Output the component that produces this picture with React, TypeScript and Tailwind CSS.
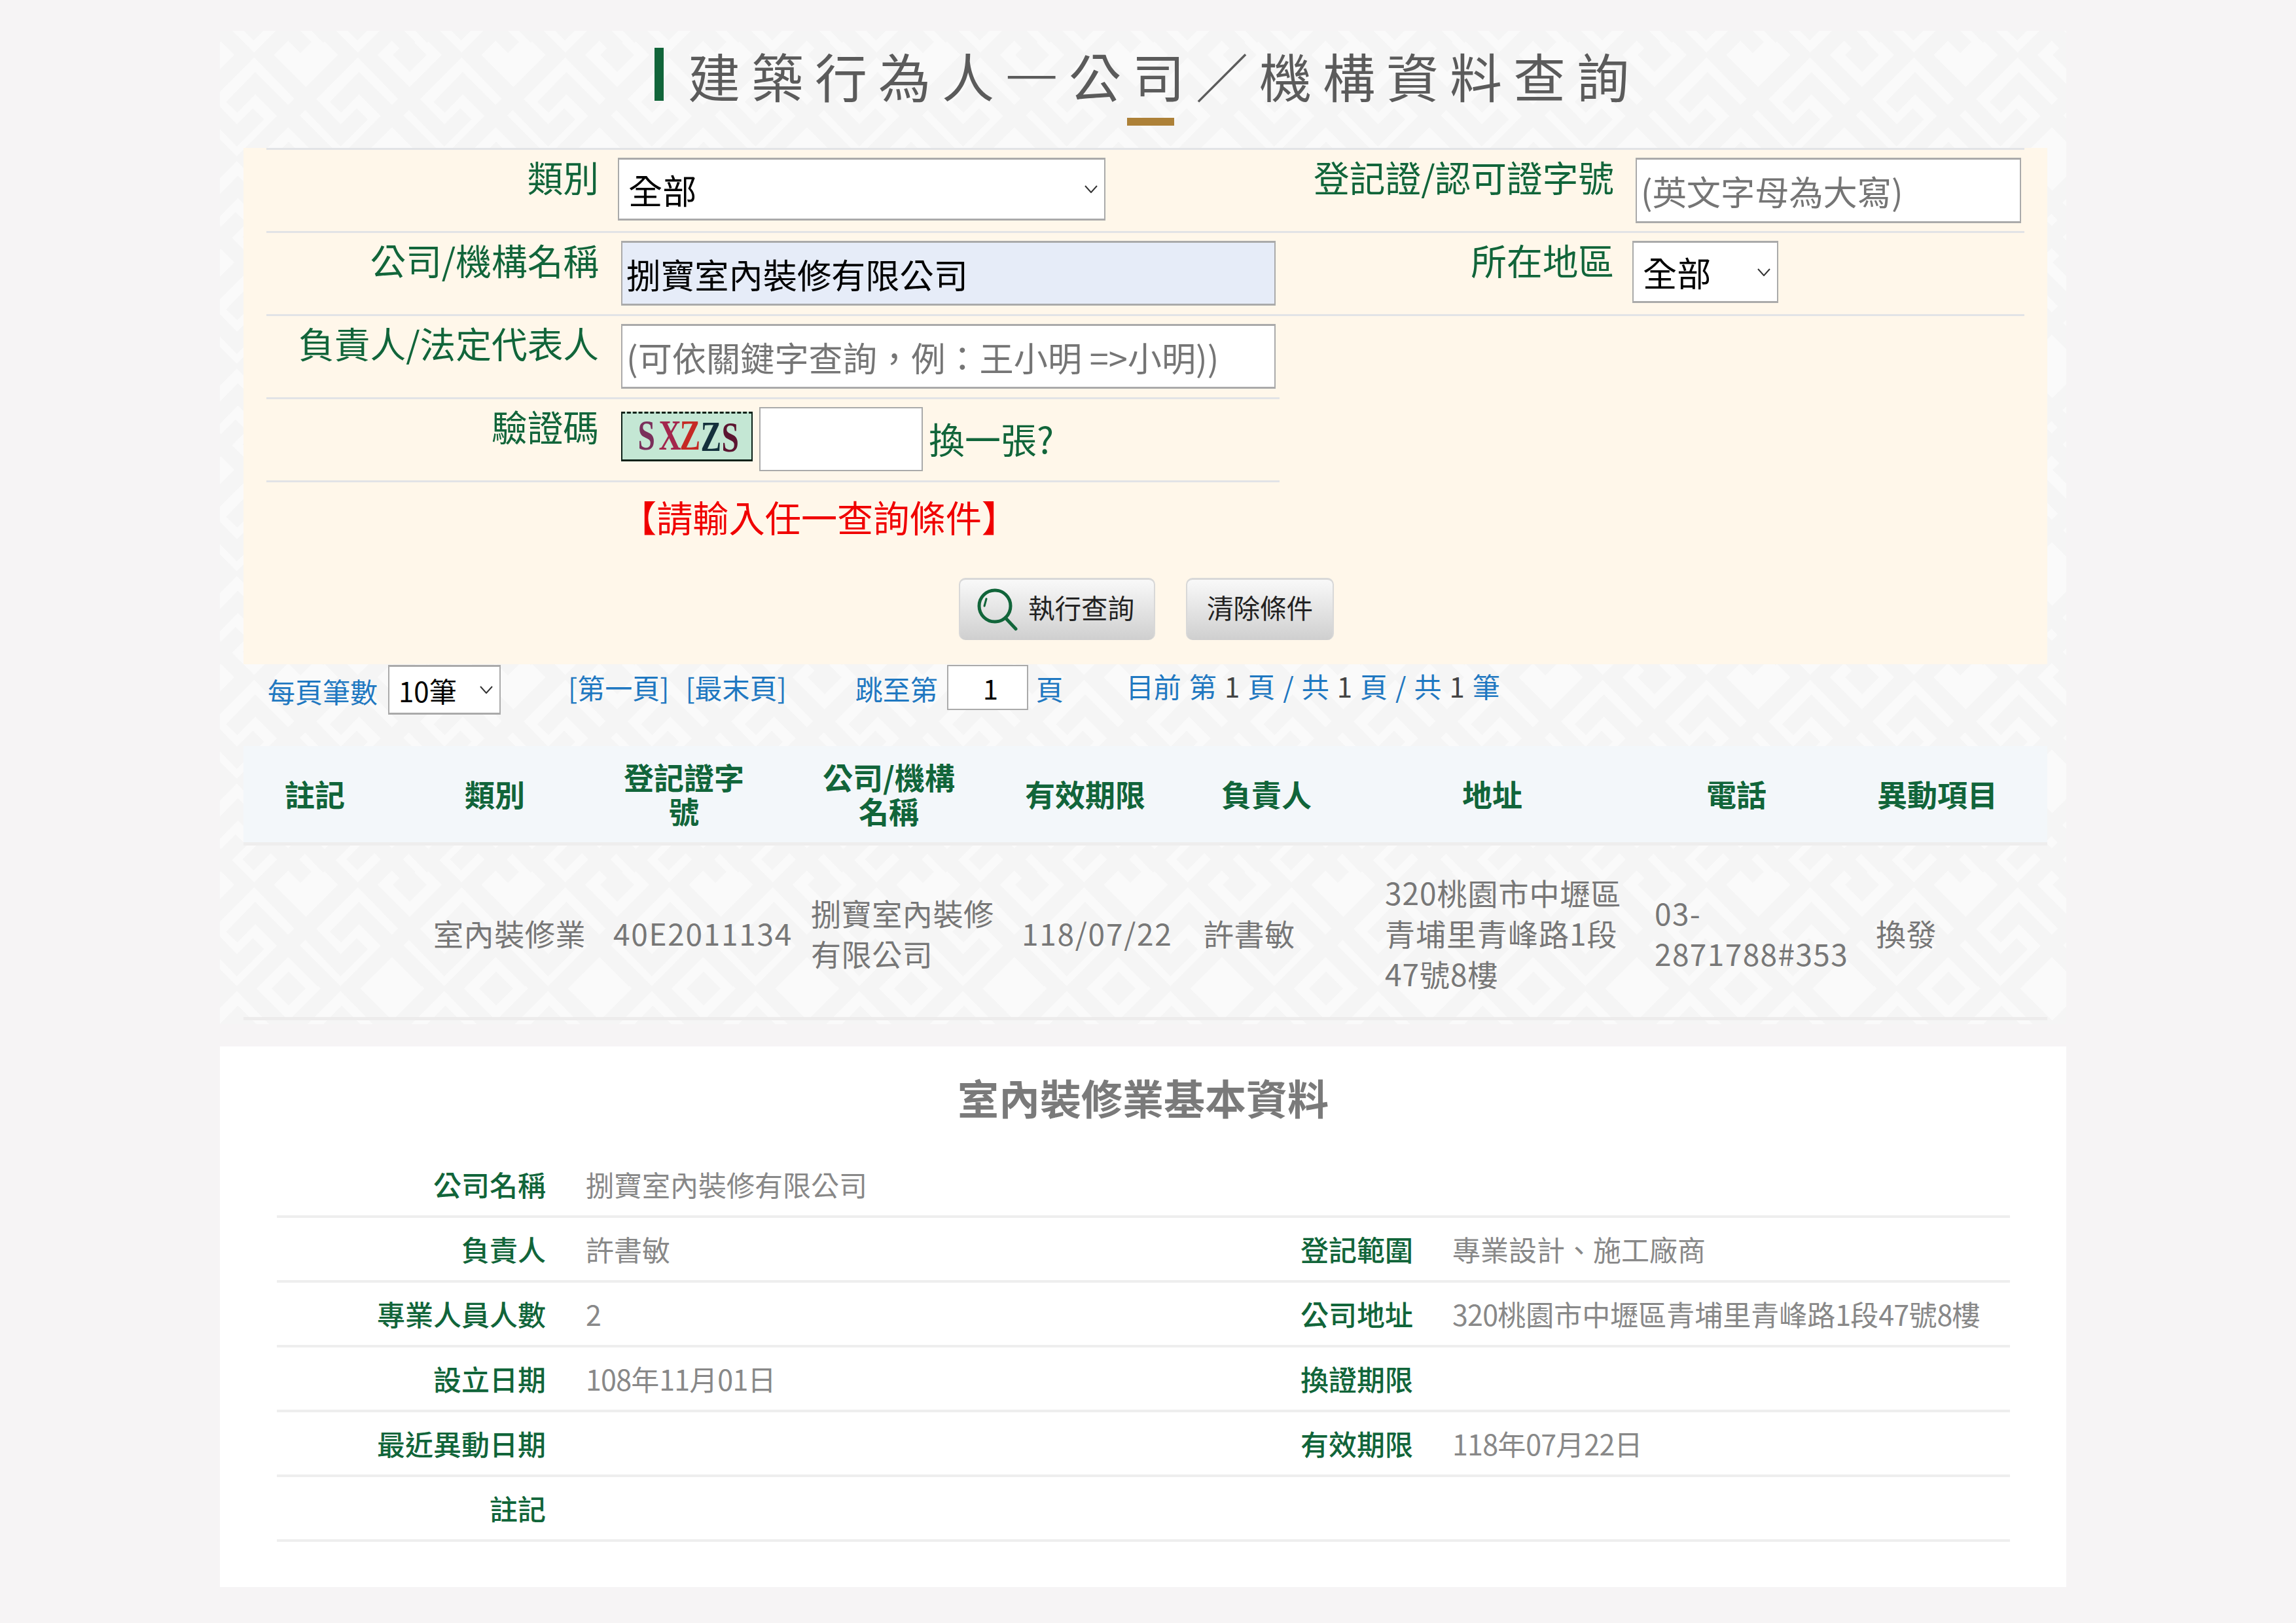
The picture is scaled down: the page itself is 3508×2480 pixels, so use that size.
import React from 'react'

const font = "font-['Noto_Sans_CJK_TC','Noto_Sans',sans-serif]"

const headers = [
  { w: 'w-[218px]', text: <>註記</> },
  { w: 'w-[332px]', text: <>類別</> },
  { w: 'w-[246px]', text: <>登記證字<br />號</> },
  { w: 'w-[380px]', text: <>公司/機構<br />名稱</> },
  { w: 'w-[220px]', text: <>有效期限</> },
  { w: 'w-[334px]', text: <>負責人</> },
  { w: 'w-[356px]', text: <>地址</> },
  { w: 'w-[390px]', text: <>電話</> },
  { w: 'w-[224px]', text: <>異動項目</> },
]

const detailRows = [
  ['公司名稱', '捌寶室內裝修有限公司', '', ''],
  ['負責人', '許書敏', '登記範圍', '專業設計、施工廠商'],
  ['專業人員人數', '2', '公司地址', '320桃園市中壢區青埔里青峰路1段47號8樓'],
  ['設立日期', '108年11月01日', '換證期限', ''],
  ['最近異動日期', '', '有效期限', '118年07月22日'],
  ['註記', '', '', ''],
]

// 底圖的菱形回紋：一個菱形環加上往下延伸的斜帶
function Unit({ solid }: { solid: boolean }) {
  return (
    <g>
      {solid && <path d="M-26 0 L0 -26 L26 0 L0 26 Z" fill="#f5f5f5" stroke="none" />}
      <path d="M-66 0 L0 -66 L66 0 L0 66 Z" />
      <path d="M-66 0 L53 123 L86 90" />
      <path d="M66 0 L-62 128" />
      <path d="M45 80 L81 43 L185 147" />
    </g>
  )
}

function Pattern() {
  const rows = [-2, -1, 0, 1, 2]
  const cols = [-4, -3, -2, -1, 0, 1, 2, 3, 4]
  return (
    <svg className="absolute inset-0 w-full h-full" aria-hidden="true">
      <defs>
        <pattern id="lattice" width="317" height="317" patternUnits="userSpaceOnUse" patternTransform="translate(290 37)">
          <g fill="none" stroke="#f5f5f5" strokeWidth="24">
            {rows.map((r) =>
              cols.map((c) => (
                <g key={`${r}-${c}`} transform={`translate(${c * 158.5 + (r % 2 !== 0 ? 132 : 0)} ${r * 158.5})`}>
                  <Unit solid={c % 2 === 0} />
                </g>
              ))
            )}
          </g>
        </pattern>
      </defs>
      <rect width="100%" height="100%" fill="#fafafa" />
      <rect width="100%" height="100%" fill="url(#lattice)" />
    </svg>
  )
}

function Label({ w, children }: { w: string; children: React.ReactNode }) {
  return <div className={`${w} shrink-0 text-right text-[54.7px] leading-[81px] text-[#11653a]`}>{children}</div>
}

function Select({ value, className, textClass }: { value: string; className: string; textClass: string }) {
  return (
    <div className={`relative ${className}`}>
      <select
        defaultValue={value}
        className={`appearance-none w-full h-full pl-[14px] bg-white border-x-2 border-y-[3px] border-[#aaaaaa] text-black outline-none ${textClass}`}
      >
        <option>{value}</option>
      </select>
      <svg
        className="absolute right-[12px] top-1/2 -translate-y-1/2 pointer-events-none"
        width="20"
        height="12"
        viewBox="0 0 20 12"
        fill="none"
        stroke="#333333"
        strokeWidth="2"
      >
        <path d="M1 1 L10 11 L19 1" />
      </svg>
    </div>
  )
}

// 數字字距比中文窄一點
function Value({ text }: { text: string }) {
  return (
    <>
      {text.split(/(\d+)/).map((part, i) =>
        /\d/.test(part) ? (
          <span key={i} className="tracking-[-0.8px]">{part}</span>
        ) : (
          part
        )
      )}
    </>
  )
}

const boxClass =
  'border-x-2 border-y-[3px] border-[#aaaaaa] text-[52.2px] leading-none text-black placeholder:text-[#757575] outline-none'

const captchaLetter = 'inline-block w-[32px] text-center scale-x-[0.72]'

export default function App() {
  return (
    <div className={`${font} w-[3508px] h-[2480px] bg-[#f6f4f5] pt-[47px] pl-[336px] overflow-hidden`}>
      <div className="relative w-[2821px] h-[1518px]">
        <Pattern />
        <div className="relative">
          {/* 標題 */}
          <div className="h-[133px] pl-[664px] pt-[26px] flex items-start">
            <div className="w-[14px] h-[81px] bg-[#11653a]" />
            <h1 className="ml-[37px] -mt-[11px] text-[80px] leading-[104px] tracking-[17px] text-[#5b5b5b] font-normal whitespace-nowrap">
              建築行為人<span className="font-light">一</span>公司／機構資料查詢
            </h1>
          </div>
          <div className="ml-[1386px] w-[72px] h-[12px] bg-[#ad8138]" />

          {/* 查詢表單 */}
          <div className="ml-[36px] mt-[34px] w-[2756px] h-[789px] bg-[#fff7ea] px-[35px]">
            <div className="h-[127px] border-t-[3px] border-[#e2e3e6] flex">
              <div className="w-[1548px] shrink-0 flex">
                <Label w="w-[508px]">類別</Label>
                <Select value="全部" className="ml-[29px] mt-[12px] w-[745px] h-[96px]" textClass="text-[52.2px]" />
              </div>
              <Label w="w-[511px]">登記證/認可證字號</Label>
              <input placeholder="(英文字母為大寫)" className={`${boxClass} ml-[33px] mt-[12px] w-[589px] h-[100px] px-[6px] bg-white`} />
            </div>
            <div className="h-[127px] border-t-[3px] border-[#e2e3e6] flex">
              <div className="w-[1548px] shrink-0 flex">
                <Label w="w-[508px]">公司/機構名稱</Label>
                <input readOnly defaultValue="捌寶室內裝修有限公司" className={`${boxClass} ml-[34px] mt-[12px] w-[1000px] h-[99px] px-[6px] bg-[#e6ecf8]`} />
              </div>
              <Label w="w-[511px]">所在地區</Label>
              <Select value="全部" className="ml-[28px] mt-[12px] w-[223px] h-[95px]" textClass="text-[52.2px]" />
            </div>
            <div className="h-[127px] border-t-[3px] border-[#e2e3e6] flex">
              <Label w="w-[508px]">負責人/法定代表人</Label>
              <input placeholder="(可依關鍵字查詢，例：王小明 =>小明))" className={`${boxClass} ml-[34px] mt-[12px] w-[1000px] h-[99px] px-[6px] bg-white`} />
            </div>
            <div className="w-[1548px] h-[130px] border-y-[3px] border-[#e2e3e6] flex">
              <Label w="w-[508px]">驗證碼</Label>
              <div className="ml-[34px] mt-[19px] pb-[5px] w-[201px] h-[76px] bg-[#c4e7d4] border-x-2 border-b-[3px] border-t-[3px] border-[#0c2118] [border-top-style:dashed] flex items-center justify-center overflow-hidden font-['Liberation_Serif',serif] font-bold text-[66px] leading-none">
                <span className={`${captchaLetter} text-[#7a2f5b]`}>S</span>
                <span className={`${captchaLetter} text-[#a3264d]`}>X</span>
                <span className={`${captchaLetter} text-[#c52a25]`}>Z</span>
                <span className={`${captchaLetter} text-[#14303c] translate-y-[2px]`}>Z</span>
                <span className={`${captchaLetter} text-[#5c1530] translate-y-[3px]`}>S</span>
              </div>
              <input className="ml-[10px] mt-[12px] w-[250px] h-[98px] border-2 border-[#aaaaaa] bg-white outline-none" />
              <div className="ml-[9px] mt-[19px] text-[55px] leading-[81px] text-[#11653a]">換一張?</div>
            </div>
            <div className="pl-[541px] pt-[12px] text-[55.2px] leading-[81px] text-[#f00000]">【請輸入任一查詢條件】</div>
            <div className="ml-[1058px] mt-[53px] flex gap-[47px]">
              <button className="w-[300px] h-[95px] rounded-[10px] border-t-[3px] border-x-2 border-[#d8d8d8] border-b-0 bg-gradient-to-b from-[#f9f9f9] to-[#cfcfcf] flex items-center pl-[26px] text-[40.5px] text-[#222222]">
                <svg width="62" height="66" viewBox="0 0 62 66" fill="none" stroke="#11653a" strokeLinecap="round">
                  <circle cx="27" cy="27" r="24" strokeWidth="5" />
                  <path d="M43 45 L59 62" strokeWidth="5" />
                  <path d="M14 16 L11 27" strokeWidth="3" />
                </svg>
                <span className="ml-[16px] pb-[8px]">執行查詢</span>
              </button>
              <button className="w-[226px] h-[95px] rounded-[10px] border-t-[3px] border-x-2 border-[#d8d8d8] border-b-0 bg-gradient-to-b from-[#f9f9f9] to-[#cfcfcf] text-center text-[40.5px] text-[#222222] pb-[8px]">
                清除條件
              </button>
            </div>
          </div>

          {/* 分頁列 */}
          <div className="h-[125px] pl-[73px] flex items-start text-[42px] leading-[63px] text-[#1f78c1] whitespace-nowrap">
            <span className="mt-[9px]">每頁筆數</span>
            <Select value="10筆" className="ml-[16px] mt-[1px] w-[172px] h-[76px]" textClass="" />
            <span className="ml-[103px] mt-[3px]">[第一頁]</span>
            <span className="ml-[25px] mt-[3px]">[最末頁]</span>
            <span className="ml-[105px] mt-[5px]">跳至第</span>
            <input readOnly defaultValue="1" className="ml-[14px] mt-[1px] w-[124px] h-[69px] pl-[9px] border-2 border-[#aaaaaa] bg-white text-center text-black outline-none" />
            <span className="ml-[12px] mt-[5px]">頁</span>
            <span className="ml-[96px] mt-[1px] [word-spacing:2.6px]">
              目前 第 <span className="text-[#444444]">1</span> 頁 / 共 <span className="text-[#444444]">1</span> 頁 / 共 <span className="text-[#444444]">1</span> 筆
            </span>
          </div>

          {/* 查詢結果 */}
          <div className="ml-[36px] w-[2756px]">
            <div className="h-[152px] pb-[4px] bg-[#f3f7fa] border-b-[5px] border-[#eeeded] flex items-center text-[46px] leading-[52px] font-bold text-[#11653a] text-center">
              {headers.map((h, i) => (
                <div key={i} className={`${h.w} shrink-0`}>{h.text}</div>
              ))}
            </div>
            <div className="h-[267px] border-b-[5px] border-[#edecec] flex items-center pt-[4px] text-[46px] leading-[62px] tracking-[0.6px] text-[#777777]">
              <div className="w-[290px] shrink-0" />
              <div className="w-[275px] shrink-0">室內裝修業</div>
              <div className="w-[302px] shrink-0 tracking-[1.7px]">40E2011134</div>
              <div className="w-[322px] shrink-0">捌寶室內裝修<br />有限公司</div>
              <div className="w-[278px] shrink-0 tracking-[1.75px]">118/07/22</div>
              <div className="w-[277px] shrink-0">許書敏</div>
              <div className="w-[412px] shrink-0 tracking-[1px]">320桃園市中壢區<br />青埔里青峰路1段<br />47號8樓</div>
              <div className="w-[338px] shrink-0 tracking-[1.4px]">03-<br />2871788#353</div>
              <div>換發</div>
            </div>
          </div>
        </div>
      </div>

      {/* 基本資料 */}
      <div className="mt-[34px] w-[2821px] h-[826px] bg-white pt-[30px]">
        <h2 className="text-center text-[63px] leading-[93px] font-semibold text-[#7a7a7a]">室內裝修業基本資料</h2>
        <div className="ml-[87px] mt-[40px] w-[2648px]">
          {detailRows.map(([l1, v1, l2, v2]) => (
            <div key={l1} className="h-[99px] border-b-[4px] border-[#eeeeee] flex items-center text-[43px] whitespace-nowrap">
              <div className="w-[411px] shrink-0 text-right font-medium text-[#11653a]">{l1}</div>
              <div className="ml-[61px] w-[800px] shrink-0 text-[#888888]"><Value text={v1} /></div>
              <div className="w-[464px] shrink-0 text-right font-medium text-[#11653a]">{l2}</div>
              <div className="ml-[60px] text-[#888888]"><Value text={v2} /></div>
            </div>
          ))}
        </div>
      </div>
    </div>
  )
}
